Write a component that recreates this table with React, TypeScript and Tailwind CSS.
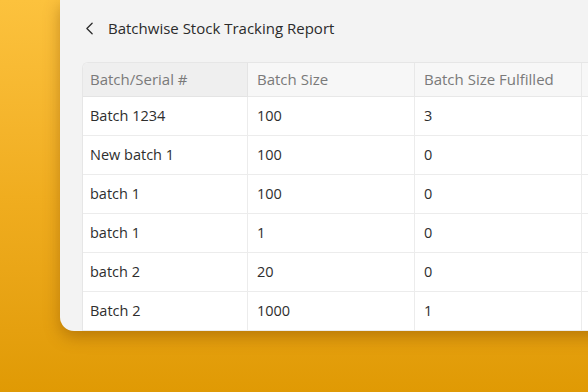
import { ChevronLeft } from 'lucide-react';

const rows = [
  ['Batch 1234', '100', '3'],
  ['New batch 1', '100', '0'],
  ['batch 1', '100', '0'],
  ['batch 1', '1', '0'],
  ['batch 2', '20', '0'],
  ['Batch 2', '1000', '1'],
];

export default function App() {
  return (
    <div
      className="w-[588px] h-[392px] overflow-hidden bg-gradient-to-b from-[#fcc23d] via-[#f0ad1f] to-[#e09a04]"
      style={{ fontFamily: '"Open Sans", "Noto Sans", sans-serif' }}
    >
      <div className="ml-[60px] w-[560px] h-[331px] bg-[#f3f3f3] rounded-bl-[14px] shadow-[0_6px_16px_rgba(130,75,0,0.45)] flex flex-col">
        <div className="h-[62px] flex items-center pl-[19px] pb-[6px] gap-[8px] text-[#2b2b2b]">
          <ChevronLeft className="w-[21px] h-[21px]" strokeWidth={1.5} />
          <span className="text-[15px]">Batchwise Stock Tracking Report</span>
        </div>
        <div className="ml-[22px] flex-1 bg-white rounded-tl-[6px] border-t border-l border-[#e6e6e6] overflow-hidden text-[14.5px]">
          <div className="flex h-[34px] text-[#7a7a7a] text-[15px]">
            <div className="w-[165px] bg-[#efefef] border-r border-b border-[#e4e4e4] flex items-center pl-[7px]">Batch/Serial #</div>
            <div className="w-[167px] bg-[#f7f7f7] border-r border-b border-[#e8e8e8] flex items-center pl-[9px]">Batch Size</div>
            <div className="w-[167px] bg-[#f7f7f7] border-r border-b border-[#e8e8e8] flex items-center pl-[9px]">Batch Size Fulfilled</div>
            <div className="flex-1 bg-[#f7f7f7] border-b border-[#e8e8e8]" />
          </div>
          {rows.map((r, i) => (
            <div key={i} className="flex h-[39px] text-[#2e2e2e]">
              <div className="w-[165px] border-r border-b border-[#ececec] flex items-center pl-[7px]">{r[0]}</div>
              <div className="w-[167px] border-r border-b border-[#ececec] flex items-center pl-[9px]">{r[1]}</div>
              <div className="w-[167px] border-r border-b border-[#ececec] flex items-center pl-[9px]">{r[2]}</div>
              <div className="flex-1 border-b border-[#ececec]" />
            </div>
          ))}
        </div>
      </div>
    </div>
  );
}
